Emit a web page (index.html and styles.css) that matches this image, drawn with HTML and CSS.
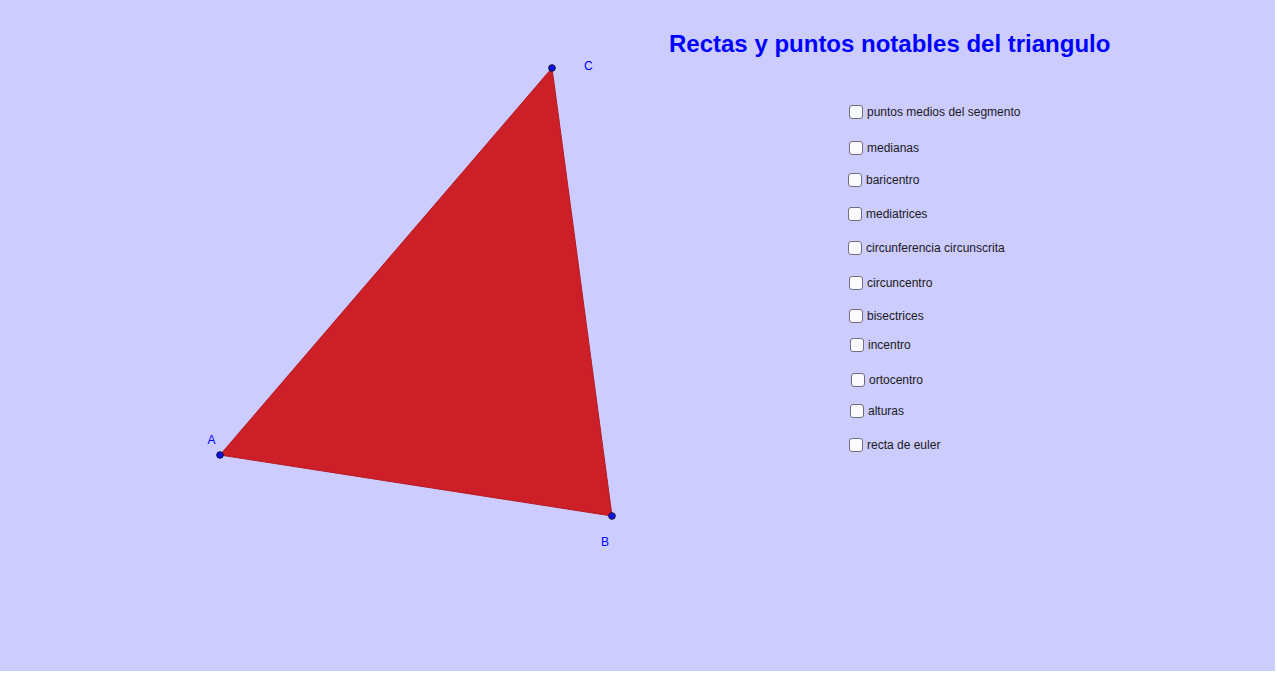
FILE: index.html
```html
<!DOCTYPE html>
<html lang="es">
<head>
<meta charset="utf-8">
<title>Rectas y puntos notables del triangulo</title>
<link rel="stylesheet" href="styles.css">
</head>
<body>
<div class="applet">
  <svg class="drawing" width="1275" height="671" viewBox="0 0 1275 671" xmlns="http://www.w3.org/2000/svg">
    <polygon points="220,455 612,516 552,68" fill="#cc1f27" stroke="#b51a22" stroke-width="1"/>
    <circle cx="220" cy="455" r="3.3" fill="#1010e8" stroke="#101040" stroke-width="1"/>
    <circle cx="612" cy="516" r="3.3" fill="#1010e8" stroke="#101040" stroke-width="1"/>
    <circle cx="552" cy="68" r="3.3" fill="#1010e8" stroke="#101040" stroke-width="1"/>
    <text class="pt-label" x="207.5" y="443.5">A</text>
    <text class="pt-label" x="601" y="546">B</text>
    <text class="pt-label" x="584" y="70">C</text>
  </svg>

  <h1 class="title">Rectas y puntos notables del triangulo</h1>

  <label class="cb cb1"><span class="box"></span><span class="txt">puntos medios del segmento</span></label>
  <label class="cb cb2"><span class="box"></span><span class="txt">medianas</span></label>
  <label class="cb cb3"><span class="box"></span><span class="txt">baricentro</span></label>
  <label class="cb cb4"><span class="box"></span><span class="txt">mediatrices</span></label>
  <label class="cb cb5"><span class="box"></span><span class="txt">circunferencia circunscrita</span></label>
  <label class="cb cb6"><span class="box"></span><span class="txt">circuncentro</span></label>
  <label class="cb cb7"><span class="box"></span><span class="txt">bisectrices</span></label>
  <label class="cb cb8"><span class="box"></span><span class="txt">incentro</span></label>
  <label class="cb cb9"><span class="box"></span><span class="txt">ortocentro</span></label>
  <label class="cb cb10"><span class="box"></span><span class="txt">alturas</span></label>
  <label class="cb cb11"><span class="box"></span><span class="txt">recta de euler</span></label>
</div>
</body>
</html>
```
FILE: styles.css
```css
html, body {
  margin: 0;
  padding: 0;
  background: #ffffff;
}

.applet {
  position: relative;
  width: 1275px;
  height: 671px;
  background: #ccccff;
  overflow: hidden;
  font-family: "Liberation Sans", Arial, sans-serif;
}

.drawing {
  position: absolute;
  left: 0;
  top: 0;
}

.pt-label {
  font-family: "Liberation Sans", Arial, sans-serif;
  font-size: 12px;
  fill: #0000ff;
}

.title {
  position: absolute;
  left: 669px;
  top: 30px;
  margin: 0;
  font-size: 24px;
  font-weight: bold;
  line-height: 28px;
  color: #0000ff;
  white-space: nowrap;
}

.cb {
  position: absolute;
  display: flex;
  align-items: center;
  gap: 4px;
  height: 14px;
  font-size: 12px;
  color: #1a1a1a;
  white-space: nowrap;
}

.box {
  display: block;
  box-sizing: border-box;
  width: 14px;
  height: 14px;
  border: 1.5px solid #6f6f7c;
  border-radius: 3px;
  background: #fbfbff;
}

.txt {
  line-height: 14px;
}

.cb1  { left: 849px; top: 105px; }
.cb2  { left: 849px; top: 141px; }
.cb3  { left: 848px; top: 173px; }
.cb4  { left: 848px; top: 207px; }
.cb5  { left: 848px; top: 241px; }
.cb6  { left: 849px; top: 276px; }
.cb7  { left: 849px; top: 309px; }
.cb8  { left: 850px; top: 338px; }
.cb9  { left: 851px; top: 373px; }
.cb10 { left: 850px; top: 404px; }
.cb11 { left: 849px; top: 438px; }
```
